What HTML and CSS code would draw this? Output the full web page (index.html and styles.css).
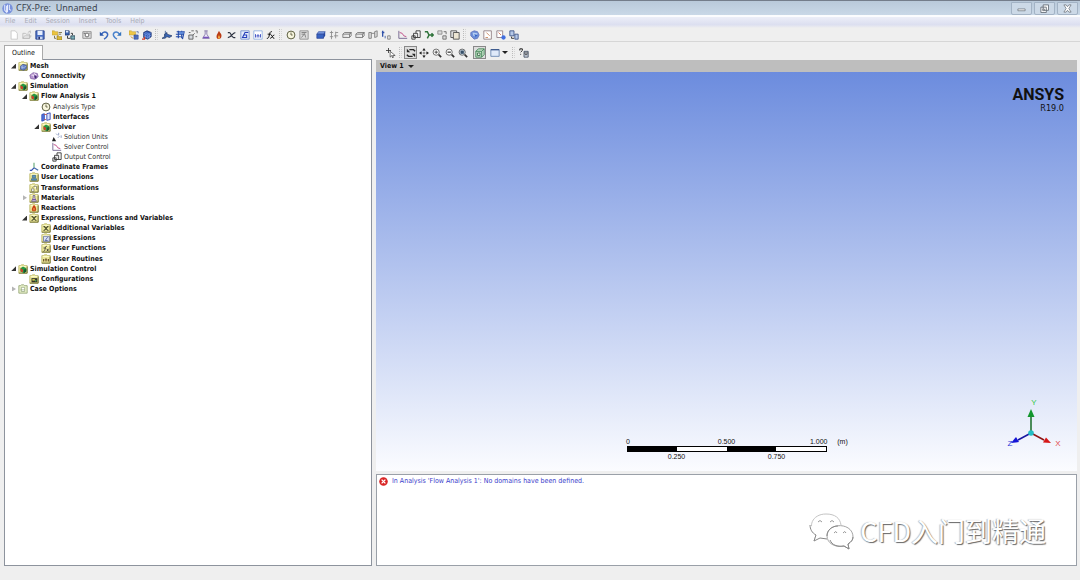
FILE: index.html
```html
<!DOCTYPE html>
<html lang="en">
<head>
<meta charset="utf-8">
<title>CFX-Pre: Unnamed</title>
<link rel="stylesheet" href="styles.css">
</head>
<body>
<svg class="defs" aria-hidden="true">
  <symbol id="new" viewBox="0 0 12 12"><path d="M2.500 1h5l2.500 3v7h-7.500z" fill="#fff" stroke="#c4c4c4"/></symbol>
  <symbol id="open" viewBox="0 0 12 12"><path d="M1 10V4h3l1 1h4v5zM3 7h8l-2 3H1zM7 3l3-2v3" fill="#eee" stroke="#bbb"/></symbol>
  <symbol id="save" viewBox="0 0 12 12"><path d="M1 1h10v10H1z" fill="#4a6fc4" stroke="#27408b"/><path d="M3 1h6v5H3z" fill="#e6eefc"/><path d="M3 8h6v3H3z" fill="#c9d6ee"/><path d="M4 8h2v3H4z" fill="#26336c"/></symbol>
  <symbol id="import" viewBox="0 0 12 12"><path d="M0 1h3l1 1h3v4H0z" fill="#ebc33e" stroke="#b7983c" stroke-width=".6"/><path d="M6 7h2l1 1h3v4H6z" fill="#d9b93a" stroke="#7b6313" stroke-width=".6"/><path d="M8 3h4M8 5h3M3 7v3h2" fill="none" stroke="#6b6236"/></symbol>
  <symbol id="export" viewBox="0 0 12 12"><path d="M0 1h5v5H0z" fill="#3d66b4" stroke="#1e366c"/><path d="M1 1h3v2H1z" fill="#dbe5fa"/><path d="M7 7h5v4H7z" fill="#7db0b8" stroke="#2b4555"/><path d="M7 4h2v2M3 7v3h3" fill="none" stroke="#222"/></symbol>
  <symbol id="camera" viewBox="0 0 12 12"><path d="M1 2h10v8H1z" fill="#ddd" stroke="#888"/><circle cx="6" cy="6" r="2.300" fill="#fff" stroke="#555"/><path d="M2 4h2M9 4h1" stroke="#555"/></symbol>
  <symbol id="undo" viewBox="0 0 12 12"><path d="M3 5c3-5 9-2 7 2-1 2-2 3-4 4" fill="none" stroke="#3b68bd" stroke-width="1.800"/><path d="M1 2v5h5z" fill="#2856ab"/></symbol>
  <symbol id="redo" viewBox="0 0 12 12"><path d="M9 5c-3-5-9-2-7 2 1 2 2 3 4 4" fill="none" stroke="#4a83cc" stroke-width="1.800"/><path d="M11 2v5H6z" fill="#3575bf"/></symbol>
  <symbol id="meshin" viewBox="0 0 12 12"><path d="M0 1h3l1 1h4v4H0z" fill="#efc647" stroke="#b7983c" stroke-width=".6"/><path d="M6 6h5v5H6z" fill="#5278ce" stroke="#233d91" stroke-width=".7"/><path d="M9 2h2v2M8 6v5M6 8h5" fill="none" stroke="#4d64a4" stroke-width=".9"/><path d="M2 8l3 2" stroke="#d28a23"/></symbol>
  <symbol id="cube" viewBox="0 0 12 12"><path d="M2 3l4-2 5 2v5l-4 3-5-2z" fill="#335bb8" stroke="#1d316f"/><path d="M2 4l5 2 4-3M7 6v5M4 3l5 2v5M4 5v5M2 7l5 2 4-3" fill="none" stroke="#8caff0" stroke-width=".6"/><path d="M0 11h3V8" fill="none" stroke="#d23a24" stroke-width="1.500"/></symbol>
  <symbol id="domain" viewBox="0 0 12 12"><path d="M0 10l3-2V5l3-2v2l3 1 3 1-3 2-3-1-3 2z" fill="#3b68bb" stroke="#21355e" stroke-width=".8"/><path d="M4 1v9" stroke="#385c94"/></symbol>
  <symbol id="subdomain" viewBox="0 0 12 12"><path d="M2 2h9l-2 9M1 5h9M1 8h6M4 1v9M8 1v9" fill="none" stroke="#2249a7" stroke-width="1.300"/><path d="M5 2h5v3H5z" fill="#5d89da"/></symbol>
  <symbol id="plane" viewBox="0 0 12 12"><path d="M1 6h5v5H1z" fill="#d5d9df" stroke="#555"/><path d="M1 3h2M4 1h3M9 1h2v3M8 4l-2 2M9 8h2" fill="none" stroke="#555"/></symbol>
  <symbol id="flask" viewBox="0 0 12 12"><path d="M4 1h4M5 1v4L2 10h8L7 5V1" fill="#eee7fa" stroke="#8275a4"/><path d="M3 8h6l1 2H2z" fill="#7753bb"/></symbol>
  <symbol id="flame" viewBox="0 0 12 12"><path d="M6 1c1 3 3 3 3 6 0 5-6 5-6 1 0-3 2-4 3-7z" fill="#ba3b13"/><path d="M6 5c0 2 1 2 1 4 0 2-2 2-2 0 0-2 1-2 1-4z" fill="#ffc34e"/></symbol>
  <symbol id="var" viewBox="0 0 12 12"><path d="M1 3h2c2 0 2 6 5 6h2M10 3C6 3 6 9 1 9" fill="none" stroke="#2c3240" stroke-width="1.500"/></symbol>
  <symbol id="expr" viewBox="0 0 12 12"><path d="M1 1h10v10H1z" fill="#e5edfc" stroke="#6d8cca"/><path d="M10 3H6L3 9h5V6H5" fill="none" stroke="#263fba" stroke-width="1.300"/></symbol>
  <symbol id="routine" viewBox="0 0 12 12"><path d="M1 1h10v10H1z" fill="#fff" stroke="#8cacde"/><path d="M3 5v4M5 9V6h2v3M9 5v4" fill="none" stroke="#263bba"/></symbol>
  <symbol id="func" viewBox="0 0 12 12"><path d="M1 10c4 1 2-9 6-8M2 5h4M6 6c2 0 2 5 4 4M10 6c-2 0-3 4-5 4" fill="none" stroke="#111" stroke-width="1.200"/></symbol>
  <symbol id="clock" viewBox="0 0 12 12"><circle cx="6" cy="6" r="4.700" fill="#f8f6df" stroke="#5e6042" stroke-width="1.200"/><path d="M6 3v3h2" fill="none" stroke="#514f36"/></symbol>
  <symbol id="calc" viewBox="0 0 12 12"><path d="M1 1h10v10H1z" fill="#ddd" stroke="#888"/><path d="M3 3h6M3 5h4l1 4M3 9l4-5" fill="none" stroke="#777"/></symbol>
  <symbol id="block" viewBox="0 0 12 12"><path d="M1 5l2-3h8L9 5z" fill="#7d9ce3" stroke="#2e4b9e" stroke-width=".8"/><path d="M1 5h8v5H1z" fill="#3763c3" stroke="#243c90" stroke-width=".8"/><path d="M9 5l2-3v5l-2 3z" fill="#2546a0"/></symbol>
  <symbol id="boundary" viewBox="0 0 12 12"><path d="M3 1v10M8 2v8M1 3h4M1 8h4M8 3h3M6 7h5" fill="none" stroke="#888"/></symbol>
  <symbol id="box" viewBox="0 0 12 12"><path d="M1 5l2-2h8L9 5H1v4h8V5l2-2v4L9 9" fill="#e2e2e2" stroke="#757575"/></symbol>
  <symbol id="panels" viewBox="0 0 12 12"><path d="M1 3h3v7H1zM8 2l3-1v7l-3 1zM4 4h4" fill="#ddd" stroke="#777"/></symbol>
  <symbol id="init" viewBox="0 0 12 12"><path d="M2 1v7M1 3h3" stroke="#3153aa" stroke-width="1.600"/><path d="M5 7v3" stroke="#3556a4"/><path d="M8 7h3v4H8z" fill="none" stroke="#777"/></symbol>
  <symbol id="graph" viewBox="0 0 12 12"><path d="M1 1v9h10" fill="none" stroke="#685986"/><path d="M2 3l3 1 2 3 3 1" fill="none" stroke="#c45990" stroke-width="1.200"/></symbol>
  <symbol id="output" viewBox="0 0 12 12"><path d="M6 1h5v8H6z" fill="#fff" stroke="#292929"/><path d="M3 4h5v5H3zM1 7h4v4H1z" fill="#e7e7e7" stroke="#333"/></symbol>
  <symbol id="branch" viewBox="0 0 12 12"><path d="M1 2h3l2 4h5M4 10l2-4M9 4l2 2-2 2" fill="none" stroke="#2e733a" stroke-width="1.800"/></symbol>
  <symbol id="link" viewBox="0 0 12 12"><path d="M1 1h5v4H1z" fill="#ddd" stroke="#888"/><path d="M8 2h3v3M7 7h4v4H7z" fill="#ddd" stroke="#666"/></symbol>
  <symbol id="copy" viewBox="0 0 12 12"><path d="M1 1h7v8H1z" fill="#eee" stroke="#444"/><path d="M4 3h7v8H4z" fill="#ece5d2" stroke="#444"/></symbol>
  <symbol id="solve" viewBox="0 0 12 12"><path d="M1 3l4-2 4 1 2 4-2 4-4 1-4-4z" fill="#6c8fd8" stroke="#6275bd"/><path d="M3 3l6 1-1 4-4-1z" fill="#b5cdf1"/><path d="M5 5l4 1-2 3z" fill="#3462c5"/></symbol>
  <symbol id="def" viewBox="0 0 12 12"><path d="M1 1h9v10H1z" fill="#fff" stroke="#8a777c"/><path d="M4 3l4 4M3 9h3" fill="none" stroke="#c67f55"/></symbol>
  <symbol id="run" viewBox="0 0 12 12"><path d="M1 1h7v8H1z" fill="#fff" stroke="#8b7880"/><path d="M3 3l3 3" stroke="#d26245"/><circle cx="9" cy="9" r="2.600" fill="#426fe0"/></symbol>
  <symbol id="transfer" viewBox="0 0 12 12"><path d="M1 1h5v6H1zM7 5h4v6H7z" fill="#b5c8e8" stroke="#354d83"/><path d="M3 8v2h3" fill="none" stroke="#222"/></symbol>
  <symbol id="select" viewBox="0 0 12 12"><path d="M3 0v6M0 3h6" stroke="#333"/><path d="M5 4v7l2-2 1 3 1-1-1-2h3z" fill="#fff" stroke="#333" stroke-width=".8"/></symbol>
  <symbol id="rotate" viewBox="0 0 12 12"><path d="M4 2h5l2 2M8 10H3L1 8" fill="none" stroke="#252525" stroke-width="1.600"/><path d="M1 1v4h4zM11 11V7H7z" fill="#252525"/></symbol>
  <symbol id="pan" viewBox="0 0 12 12"><path d="M6 2v8M2 6h8" stroke="#555" stroke-dasharray="2 1"/><path d="M6 0l2 3H4zM6 12l2-3H4zM0 6l3-2v4zM12 6L9 4v4z" fill="#252525"/></symbol>
  <symbol id="zoomio" viewBox="0 0 12 12"><circle cx="5" cy="5" r="3.700" fill="#fff" stroke="#555"/><path d="M8 8l3 3" stroke="#333" stroke-width="2"/><path d="M3 5h4M5 3v4" stroke="#333"/></symbol>
  <symbol id="zoombox" viewBox="0 0 12 12"><circle cx="5" cy="5" r="3.700" fill="#fff" stroke="#555"/><path d="M8 8l3 3" stroke="#333" stroke-width="2"/><path d="M3 5h4" stroke="#333" stroke-width="1.500"/></symbol>
  <symbol id="fit" viewBox="0 0 12 12"><circle cx="5" cy="5" r="3.700" fill="#d9e5ee" stroke="#555"/><path d="M8 8l3 3" stroke="#333" stroke-width="2"/><path d="M3 3h4v4H3z" fill="#364f68"/></symbol>
  <symbol id="wire" viewBox="0 0 12 12"><path d="M1 4l3-3h7v7l-3 3H1zM1 4h7v7M8 4l3-3" fill="#c3dcc6" stroke="#3b8350"/><path d="M3 6h3v3H3z" fill="#eee" stroke="#356f45"/></symbol>
  <symbol id="window" viewBox="0 0 12 12"><path d="M1 2h10v8H1z" fill="#e0eafa" stroke="#6180ae"/><path d="M1 2h10" stroke="#3b588b" stroke-width="1.500"/></symbol>
  <symbol id="helpbox" viewBox="0 0 12 12"><path d="M1 3V1h3v2L2 5M2 7v1" fill="none" stroke="#222" stroke-width="1.200"/><path d="M6 4h5v7H6z" fill="#ccd3df" stroke="#3d4a5c"/><path d="M6 6h5M7 8h3" stroke="#333"/></symbol>
  <symbol id="folder" viewBox="0 0 12 12"><path d="M1 11V2h2l1-1h3l1 1h3v9z" fill="#eee99c" stroke="#b9b567"/><path d="M1 11h10V3" fill="none" stroke="#67662c"/><path d="M2 3h8" stroke="#fffcd2"/></symbol>
  <symbol id="f-mesh" viewBox="0 0 12 12"><use href="#folder"/><path d="M3 6l3-2 4 1v4l-3 2-4-1z" fill="#6685ca" stroke="#35467f" stroke-width=".8"/><path d="M3 7l4 1 3-2M5 5v5" fill="none" stroke="#dce6fa" stroke-width=".5"/></symbol>
  <symbol id="connect" viewBox="0 0 12 12"><path d="M1 5l4-3 5 1 1 4-4 3-5-1z" fill="#b592cf" stroke="#76569a" stroke-width=".8"/><path d="M3 5h3v3M6 3l3 2" fill="none" stroke="#fff"/><path d="M6 5l3 1v3H7z" fill="#432475"/></symbol>
  <symbol id="f-sim" viewBox="0 0 12 12"><use href="#folder"/><path d="M3 5l3-2 4 2v4l-3 2-4-2z" fill="#269744"/><path d="M3 5l3 2v3L3 9z" fill="#ce4129"/><path d="M7 7l3-1v3l-3 2z" fill="#18532b"/></symbol>
  <symbol id="interfaces" viewBox="0 0 12 12"><path d="M1 3l3-1v8l-3 1z" fill="#5673e0" stroke="#2547b1"/><path d="M7 2l4-1v8l-4 1z" fill="#dae2fc" stroke="#263cae"/><path d="M4 3h3M4 9h2" stroke="#c74b44"/></symbol>
  <symbol id="units" viewBox="0 0 12 12"><path d="M0 11l2-5 3 5z" fill="#202020"/><path d="M5 2l2 2M8 1v3M7 7l2-2M11 4v3" stroke="#8191bb"/></symbol>
  <symbol id="frames" viewBox="0 0 12 12"><path d="M6 7V1" stroke="#5da56f" stroke-width="1.300"/><path d="M6 7l-3 3H1" fill="none" stroke="#3450b3" stroke-width="1.500"/><path d="M6 7l5 3" stroke="#456bac" stroke-width="1.500"/></symbol>
  <symbol id="f-loc" viewBox="0 0 12 12"><use href="#folder"/><path d="M4 4h4v3H4zM3 8h6v2H3z" fill="#5993c4" stroke="#275879" stroke-width=".7"/></symbol>
  <symbol id="f-trans" viewBox="0 0 12 12"><use href="#folder"/><path d="M3 7h3v3H3zM6 4h3v4M4 6l3-3" fill="#fff" stroke="#6c6c52" stroke-width=".8"/></symbol>
  <symbol id="f-mat" viewBox="0 0 12 12"><use href="#folder"/><path d="M5 3h2v3l2 4H3l2-4z" fill="#ece7f5" stroke="#675a7c"/><path d="M4 8h4" stroke="#724da5" stroke-width="1.500"/></symbol>
  <symbol id="f-react" viewBox="0 0 12 12"><use href="#folder"/><path d="M6 2c3 3 4 8 0 8S3 6 6 2z" fill="#ca4016"/><path d="M6 6v3" stroke="#ffce5c"/></symbol>
  <symbol id="f-var" viewBox="0 0 12 12"><use href="#folder"/><path d="M3 4c3 0 3 5 6 5M9 4C6 4 6 9 3 9" fill="none" stroke="#45472a" stroke-width="1.300"/></symbol>
  <symbol id="f-expr" viewBox="0 0 12 12"><use href="#folder"/><path d="M3 4h7v6H3z" fill="#dce3f5" stroke="#717aa2"/><path d="M8 5L5 9h3" fill="none" stroke="#4c5ba6"/></symbol>
  <symbol id="f-func" viewBox="0 0 12 12"><use href="#folder"/><path d="M3 10c3 0 1-7 4-6M3 6h3M7 7l2 3M9 7l-2 3" fill="none" stroke="#333"/></symbol>
  <symbol id="f-routine" viewBox="0 0 12 12"><use href="#folder"/><path d="M3 6v3M5 9V6h2v3M9 6v3" fill="none" stroke="#563b16"/></symbol>
  <symbol id="f-config" viewBox="0 0 12 12"><use href="#folder"/><path d="M3 5h7v5H3z" fill="#302f25"/><path d="M4 6h3v2H4z" fill="#d4c94d"/><circle cx="8" cy="8" r="1" fill="#47a25b"/></symbol>
  <symbol id="f-case" viewBox="0 0 12 12"><path d="M1 11V2h2l1-1h3l1 1h3v9z" fill="#e8f0c8" stroke="#93a374"/><path d="M4 4h4v5H4zM3 7h5" fill="#fff" stroke="#8da075" stroke-width=".8"/></symbol>
</svg>

<div class="app">
  <header class="titlebar">
    <svg class="logo" viewBox="0 0 12 12" aria-hidden="true"><circle cx="6" cy="6" r="5.700" fill="#7891dc"/><path d="M3 2v6l2 2V3M6 2v8M8 2v5l2 1" fill="none" stroke="#e7edff" stroke-width="1.100"/></svg>
    <h1 class="title">CFX-Pre:&nbsp; Unnamed</h1>
    <div class="winbtns">
      <button class="winbtn" aria-label="Minimize"><svg viewBox="0 0 10 10"><path d="M1 5.500h8v2H1z" fill="#fff" stroke="#676e78" stroke-width=".8"/></svg></button>
      <button class="winbtn" aria-label="Restore"><svg viewBox="0 0 10 10"><path d="M3.500 1h6v6h-6zM1 3.500h6v6H1z" fill="#fff" stroke="#676e78"/><path d="M3 5.500h2v2H3z" fill="#aaa" stroke="#676e78" stroke-width=".6"/></svg></button>
      <button class="winbtn" aria-label="Close"><svg viewBox="0 0 10 10"><path d="M1 1h2.500L5 3l1.500-2H9L6.500 5 9 9H6.500L5 7 3.500 9H1l2.500-4z" fill="#fff" stroke="#676e78" stroke-width=".8"/></svg></button>
    </div>
  </header>
  <nav class="menubar">
    <button>File</button><button>Edit</button><button>Session</button><button>Insert</button><button>Tools</button><button>Help</button>
  </nav>
  <div class="toolbar main-tools" role="toolbar" aria-label="Main">
    <button aria-label="New case"><svg><use href="#new"/></svg></button>
    <button aria-label="Open case"><svg><use href="#open"/></svg></button>
    <button aria-label="Save case"><svg><use href="#save"/></svg></button>
    <span class="sep"></span>
    <button aria-label="Import"><svg><use href="#import"/></svg></button>
    <button aria-label="Export"><svg><use href="#export"/></svg></button>
    <span class="sep"></span>
    <button aria-label="Save picture"><svg><use href="#camera"/></svg></button>
    <span class="sep"></span>
    <button aria-label="Undo"><svg><use href="#undo"/></svg></button>
    <button aria-label="Redo"><svg><use href="#redo"/></svg></button>
    <span class="sep"></span>
    <button aria-label="Import mesh"><svg><use href="#meshin"/></svg></button>
    <button aria-label="Transform mesh"><svg><use href="#cube"/></svg></button>
    <span class="grip"></span>
    <button aria-label="Domain"><svg><use href="#domain"/></svg></button>
    <button aria-label="Subdomain"><svg><use href="#subdomain"/></svg></button>
    <button aria-label="Coordinate frame"><svg><use href="#plane"/></svg></button>
    <button aria-label="Material"><svg><use href="#flask"/></svg></button>
    <button aria-label="Reaction"><svg><use href="#flame"/></svg></button>
    <button aria-label="Additional variable"><svg><use href="#var"/></svg></button>
    <button aria-label="Expression"><svg><use href="#expr"/></svg></button>
    <button aria-label="User routine"><svg><use href="#routine"/></svg></button>
    <button aria-label="User function"><svg><use href="#func"/></svg></button>
    <span class="grip"></span>
    <button aria-label="Analysis type"><svg><use href="#clock"/></svg></button>
    <button aria-label="Calculator"><svg><use href="#calc"/></svg></button>
    <span class="sep"></span>
    <button aria-label="Fluid domain"><svg><use href="#block"/></svg></button>
    <button aria-label="Boundary"><svg><use href="#boundary"/></svg></button>
    <button aria-label="Source region"><svg><use href="#box"/></svg></button>
    <button aria-label="Source point"><svg><use href="#box"/></svg></button>
    <button aria-label="Domain interface"><svg><use href="#panels"/></svg></button>
    <button aria-label="Initialization"><svg><use href="#init"/></svg></button>
    <span class="sep"></span>
    <button aria-label="Solver control"><svg><use href="#graph"/></svg></button>
    <button aria-label="Output control"><svg><use href="#output"/></svg></button>
    <button aria-label="Mesh adaption"><svg><use href="#branch"/></svg></button>
    <button aria-label="Expert parameter"><svg><use href="#link"/></svg></button>
    <button aria-label="Configuration"><svg><use href="#copy"/></svg></button>
    <span class="grip"></span>
    <button aria-label="Define run"><svg><use href="#solve"/></svg></button>
    <button aria-label="Write solver file"><svg><use href="#def"/></svg></button>
    <button aria-label="Execution control"><svg><use href="#run"/></svg></button>
    <button aria-label="Transfer"><svg><use href="#transfer"/></svg></button>
  </div>
  <main class="workspace">
    <section class="outline">
      <div class="tabs" role="tablist"><button class="tab" role="tab" aria-selected="true">Outline</button></div>
      <div class="panel">
        <ul class="tree" role="tree">
          <li class="open"><svg><use href="#f-mesh"/></svg>Mesh</li>
          <li class="l1"><svg><use href="#connect"/></svg>Connectivity</li>
          <li class="open"><svg><use href="#f-sim"/></svg>Simulation</li>
          <li class="l1 open"><svg><use href="#f-sim"/></svg>Flow Analysis 1</li>
          <li class="l2 plain"><svg><use href="#clock"/></svg>Analysis Type</li>
          <li class="l2"><svg><use href="#interfaces"/></svg>Interfaces</li>
          <li class="l2 open"><svg><use href="#f-sim"/></svg>Solver</li>
          <li class="l3 plain"><svg><use href="#units"/></svg>Solution Units</li>
          <li class="l3 plain"><svg><use href="#graph"/></svg>Solver Control</li>
          <li class="l3 plain"><svg><use href="#output"/></svg>Output Control</li>
          <li class="l1"><svg><use href="#frames"/></svg>Coordinate Frames</li>
          <li class="l1"><svg><use href="#f-loc"/></svg>User Locations</li>
          <li class="l1"><svg><use href="#f-trans"/></svg>Transformations</li>
          <li class="l1 shut"><svg><use href="#f-mat"/></svg>Materials</li>
          <li class="l1"><svg><use href="#f-react"/></svg>Reactions</li>
          <li class="l1 open"><svg><use href="#f-var"/></svg>Expressions, Functions and Variables</li>
          <li class="l2"><svg><use href="#f-var"/></svg>Additional Variables</li>
          <li class="l2"><svg><use href="#f-expr"/></svg>Expressions</li>
          <li class="l2"><svg><use href="#f-func"/></svg>User Functions</li>
          <li class="l2"><svg><use href="#f-routine"/></svg>User Routines</li>
          <li class="open"><svg><use href="#f-sim"/></svg>Simulation Control</li>
          <li class="l1"><svg><use href="#f-config"/></svg>Configurations</li>
          <li class="shut"><svg><use href="#f-case"/></svg>Case Options</li>
        </ul>
      </div>
    </section>
    <section class="viewer">
      <div class="toolbar view-tools" role="toolbar" aria-label="View">
        <button aria-label="Select"><svg><use href="#select"/></svg></button>
        <span class="grip"></span>
        <button class="on" aria-label="Rotate"><svg><use href="#rotate"/></svg></button>
        <button aria-label="Pan"><svg><use href="#pan"/></svg></button>
        <button aria-label="Zoom"><svg><use href="#zoomio"/></svg></button>
        <button aria-label="Zoom box"><svg><use href="#zoombox"/></svg></button>
        <button aria-label="Fit view"><svg><use href="#fit"/></svg></button>
        <span class="sep"></span>
        <button class="on" aria-label="Highlighting"><svg><use href="#wire"/></svg></button>
        <span class="sep"></span>
        <button class="drop" aria-label="Viewport layout"><svg><use href="#window"/></svg><span class="caret"></span></button>
        <span class="grip"></span>
        <button aria-label="Viewer help"><svg><use href="#helpbox"/></svg></button>
      </div>
      <button class="viewname">View 1 <span class="caret"></span></button>
      <div class="canvas">
        <div class="brand"><strong>ANSYS</strong><span>R19.0</span></div>
        <div class="bottom">
          <div class="scale">
            <div class="labels top"><span>0</span><span>0.500</span><span>1.000</span><span>(m)</span></div>
            <div class="bar"><i></i><i></i><i></i><i></i></div>
            <div class="labels low"><span>0.250</span><span>0.750</span></div>
          </div>
          <svg class="triad" viewBox="0 0 60 54" role="img" aria-label="Axes">
            <path d="M28 36V17" stroke="#166b25" stroke-width="1.500"/><path d="M28 12l3.500 8h-7z" fill="#12962d"/>
            <path d="M28 36l13 7" stroke="#8c1515" stroke-width="1.500"/><path d="M48 46l-8-.5 3-5z" fill="#d61717"/>
            <path d="M28 36l-13 7" stroke="#1616a0" stroke-width="1.500"/><path d="M8 46l5-6 3 5z" fill="#1414d6"/>
            <circle cx="28" cy="36" r="2.800" fill="#25bdc4"/>
            <text x="31" y="8" fill="#35c84a">Y</text><text x="55" y="49" fill="#e34b4b">X</text><text x="7" y="49" fill="#2c35d8">Z</text>
          </svg>
        </div>
      </div>
      <div class="messages">
        <p class="error"><svg viewBox="0 0 12 12" aria-hidden="true"><circle cx="6" cy="6" r="5.700" fill="#d92525"/><path d="M3.500 3.500l5 5M8.500 3.500l-5 5" stroke="#fff" stroke-width="1.800"/></svg>In Analysis 'Flow Analysis 1': No domains have been defined.</p>
        <div class="mark">
          <svg viewBox="0 0 46 38" aria-hidden="true"><path d="M5 29l2-6C-2 15 3 2 17 2c9 0 14 4 15 11" stroke="#c4c4c4"/><path d="M1 13c0 4 2 8 6 10l-2 6 6-3 7 1" stroke="#888"/><path d="M40 37l-5-3c-9 2-17-3-17-10 0-14 26-14 26 1 0 3-2 5-5 7z" stroke="#a5a5a5"/><path d="M18 24c0-6 5-10 11-10M44 25c0 3-2 5-5 7l1 5-5-3c-7 1-12-1-14-6" fill="none" stroke="#888"/><path d="M9 10q2-3 4 0M21 10q2-3 4 0M25 21q2-3 3 0M34 21q2-3 3 0" stroke="#999"/></svg>
          <span>CFD入门到精通</span>
        </div>
      </div>
    </section>
  </main>
</div>
</body>
</html>
```

FILE: styles.css
```css
* { box-sizing: border-box; }
body {
  margin: 0;
  background: #efefef;
  color: #111;
  font: 7px/10px "DejaVu Sans Condensed", "DejaVu Sans", sans-serif;
}
button {
  margin: 0;
  padding: 0;
  border: 0;
  background: none;
  color: inherit;
  font: inherit;
}
.defs { position: absolute; width: 0; height: 0; }
.app { display: flex; flex-direction: column; min-height: 100vh; }

.titlebar {
  display: flex;
  align-items: center;
  height: 15px;
  padding: 0 2px;
  gap: 3px;
  border-top: 1px solid #747d8b;
  background: linear-gradient(#b9c9da, #c9d8e7);
}
.logo { width: 11px; height: 11px; }
.title { margin: 0; font: 9px/12px "Noto Sans", sans-serif; color: #3c4550; }
.winbtns { display: flex; gap: 2px; margin-left: auto; height: 13px; }
.winbtn {
  display: grid;
  place-items: center;
  width: 21px;
  border: 1px solid #a3b3c5;
  border-radius: 0 0 2px 2px;
  background: #ccd9e7;
}
.winbtn svg { width: 9px; height: 9px; }

.menubar {
  display: flex;
  align-items: flex-start;
  gap: 9px;
  height: 13px;
  padding: 0 5px;
  border-top: 2px solid #fbfcfe;
  background: linear-gradient(#eceef8, #dcdff0 70%, #efefef);
  color: #a9abb5;
  line-height: 9px;
}
.toolbar { display: flex; align-items: center; }
.toolbar button { display: grid; place-items: center; width: 13px; height: 13px; }
.toolbar svg { width: 10px; height: 10px; }
.sep { width: 4px; }
.grip {
  width: 3px;
  height: 11px;
  margin: 0 2px;
  border-left: 1px dotted #bbb;
  border-right: 1px dotted #d4d4d4;
}
.main-tools { height: 14px; padding-left: 7px; border-bottom: 1px solid #d6d6d6; }

.workspace {
  flex: 1;
  display: grid;
  grid-template-columns: 368fr 701fr;
  gap: 4px;
  padding: 3px 3px 14px 4px;
}
.outline { display: flex; flex-direction: column; }
.tabs { display: flex; height: 14px; }
.tab {
  width: 39px;
  border: 1px solid #aaa;
  border-bottom: 0;
  background: #fff;
  z-index: 1;
  margin-bottom: -1px;
}
.panel { flex: 1; border: 1px solid #8d939d; background: #fff; }
.tree {
  display: grid;
  grid-auto-rows: 1fr;
  height: 234px;
  margin: 0;
  padding: 1px 6px 0;
  list-style: none;
  font-weight: bold;
}
.tree li { display: flex; align-items: center; gap: 2px; white-space: nowrap; }
.tree li::before { content: ""; flex: none; width: 5px; height: 5px; }
.tree svg { width: 10px; height: 10px; }
.tree .open::before { background: #333; clip-path: polygon(100% 0, 100% 100%, 0 100%); }
.tree .shut::before { background: #b5b5b5; clip-path: polygon(20% 0, 100% 50%, 20% 100%); }
.tree .l1 { padding-left: 11px; }
.tree .l2 { padding-left: 23px; }
.tree .l3 { padding-left: 34px; }
.tree .plain { font-weight: normal; color: #333; }

.viewer { display: flex; flex-direction: column; }
.view-tools { height: 15px; padding-left: 8px; }
.view-tools .on { border: 1px solid #888; background: #ddd; }
.toolbar .drop { display: flex; align-items: center; gap: 2px; width: 20px; }
.caret { border: solid transparent; border-width: 3px 3px 0; border-top-color: #222; }
.viewname {
  display: flex;
  align-items: center;
  gap: 4px;
  height: 12px;
  padding: 0 4px;
  background: #bebebe;
  font-weight: bold;
}
.canvas {
  flex: 1;
  display: flex;
  flex-direction: column;
  justify-content: space-between;
  background: linear-gradient(#6c8cde, #fbfcff);
}
.brand {
  display: flex;
  flex-direction: column;
  align-items: flex-end;
  padding: 15px 13px;
  font: 9px/10px "DejaVu Sans Condensed", sans-serif;
}
.brand strong { font: bold 16px/16px Roboto, sans-serif; }
.bottom {
  display: grid;
  grid-template-columns: 1fr 200px 1fr;
  align-items: end;
  padding: 0 14px 10px;
  font: 7px/9px "Liberation Sans", sans-serif;
}
.scale { grid-column: 2; }
.labels { display: grid; justify-items: center; }
.top { grid-template-columns: 3px 194px 4px 30px; }
.top span:nth-child(3) { justify-self: end; }
.low { grid-template-columns: 100px 100px; }
.bar { display: flex; width: 200px; height: 6px; border: 1px solid #000; background: #fff; }
.bar i { flex: 1; }
.bar i:nth-child(odd) { background: #000; }
.triad { justify-self: end; width: 60px; height: 54px; margin-bottom: 10px; }
.triad text { font-size: 8px; text-anchor: middle; }

.messages {
  display: flex;
  flex-direction: column;
  justify-content: space-between;
  height: 92px;
  margin-top: 3px;
  padding: 1px 30px 15px 2px;
  border: 1px solid #9aa0a8;
  background: #fff;
}
.error { display: flex; align-items: center; gap: 4px; margin: 0; color: #3a3ccb; }
.error svg { width: 9px; height: 9px; }
.mark {
  display: flex;
  align-items: center;
  gap: 5px;
  align-self: flex-end;
  color: #fff;
  font: 27px/36px "Noto Sans CJK SC", sans-serif;
  text-shadow: 1px 1px 1px #666, -1px 0 1px #bbb;
}
.mark svg { width: 46px; height: 38px; fill: #fff; }
```
